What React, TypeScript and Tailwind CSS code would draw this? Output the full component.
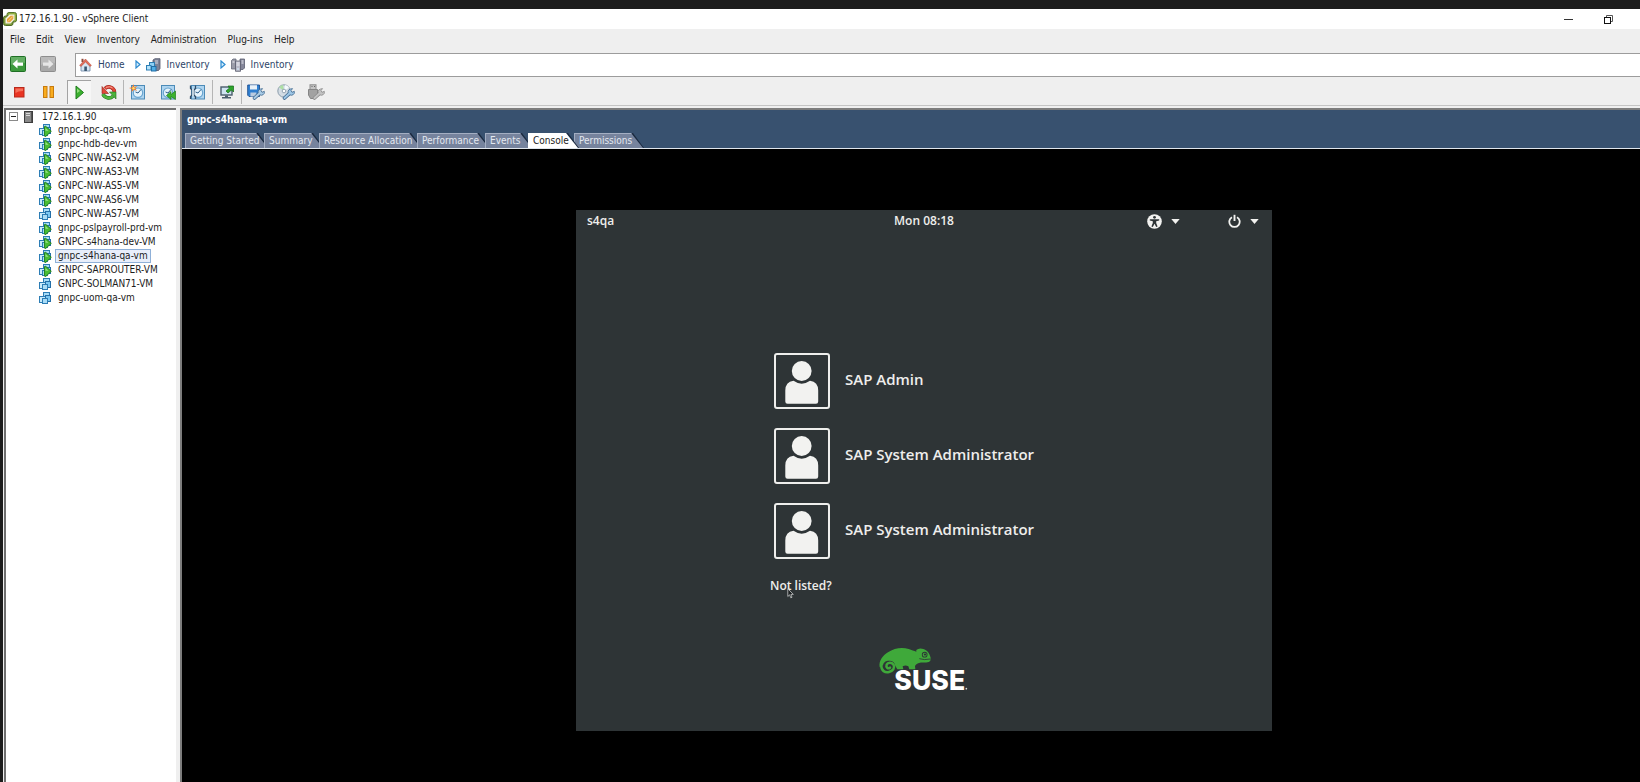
import React from "react";

type IconProps = { className?: string };

/* ---------- Window and navigation icons ---------- */

function VSphereLogo() {
  return (
    <svg viewBox="0 0 14 14" className="h-[14px] w-[14px]" aria-hidden="true">
      <rect x="4" y="0.5" width="9.5" height="9.5" rx="2" fill="#8fae3f" stroke="#56752a" />
      <rect x="0.5" y="4" width="9.5" height="9.5" rx="2" fill="#7f9c3a" stroke="#4d6a26" />
      <path d="M2.500 11.500V6.500L6.500 2.500H11.500V7.500L7.500 11.500Z" fill="#f4f1e4" />
      <path d="M4 10.2V7L7.5 3.8H10.3V6.8L7 10.2Z" fill="#e9a13b" />
      <path d="M4.5 9.8L10 4.300" stroke="#f6d48d" strokeWidth="1" />
    </svg>
  );
}

function NavArrow({ back }: { back?: boolean }) {
  return (
    <svg viewBox="0 0 16 16" className="h-4 w-4" aria-hidden="true">
      <rect x="0.5" y="0.5" width="15" height="15" rx="1" fill={back ? "#3c9a3c" : "#a9a9a9"} stroke={back ? "#1f6f25" : "#8d8d8d"} />
      <path d="M1 1H15V7Q8 5 1 9Z" fill="#fff" opacity="0.2" />
      {back ? (
        <path d="M2.5 8L7.5 3.6V6.4H13V9.8H7.5V12.5Z" fill="#fff" />
      ) : (
        <path d="M13.5 8L8.5 3.6V6.4H3V9.8H8.5V12.5Z" fill="#e6e6e6" />
      )}
    </svg>
  );
}

function HomeIcon() {
  return (
    <svg viewBox="0 0 13 14" className="h-[14px] w-[13px]" aria-hidden="true">
      <path d="M2 7L6.5 3L11 7V13H2Z" fill="#d7e6f2" stroke="#6d87a5" strokeWidth="0.8" />
      <path d="M2.5 0.8H4.5V4H2.5Z" fill="#8c4a3c" />
      <path d="M0.6 7.4L6.5 1L12.4 7.4L11 8.4L6.5 4L2 8.4Z" fill="#e2705c" stroke="#b04231" strokeWidth="0.5" />
      <rect x="5.3" y="8.5" width="2.6" height="4.5" fill="#39566f" />
    </svg>
  );
}

function InventoryVmIcon() {
  return (
    <svg viewBox="0 0 15 14" className="h-[14px] w-[15px]" aria-hidden="true">
      <path d="M7 2L9 0.7H14V10.5L12.5 12.5H7Z" fill="#7d8296" stroke="#515669" strokeWidth="0.8" />
      <path d="M9 3H12M9 5H12" stroke="#d4d8e4" />
      <rect x="3.5" y="4.5" width="5" height="5" fill="#8fd0f4" stroke="#2d7fb5" />
      <rect x="0.5" y="7.5" width="4.5" height="4.5" fill="#b5e2fa" stroke="#2d7fb5" />
      <rect x="5.5" y="8.5" width="4.5" height="4.5" fill="#4eaee5" stroke="#226fa6" />
    </svg>
  );
}

function InventoryHostsIcon() {
  return (
    <svg viewBox="0 0 14 14" className="h-[14px] w-[14px]" aria-hidden="true">
      <path d="M0.5 2.5L2 1H5V11H0.5Z" fill="#9a9ca8" stroke="#666978" strokeWidth="0.8" />
      <path d="M9 1H13.5V10L12 11.5H9Z" fill="#85879a" stroke="#5b5e70" strokeWidth="0.8" />
      <path d="M4.5 3H9.5V13.3H4.5Z" fill="#b9bbc8" stroke="#585b6b" strokeWidth="0.8" />
      <path d="M5.5 5H8.5M5.5 7H8.5M1.5 4H3.5M10.5 3H12.5M10.5 5H12.5" stroke="#f1f1f6" />
      <circle cx="7" cy="11" r="0.9" fill="#d2e7f7" />
    </svg>
  );
}

function CrumbArrow() {
  return (
    <svg viewBox="0 0 6 9" className="h-[9px] w-[6px]" aria-hidden="true">
      <path d="M1 1L5 4.5L1 8Z" fill="#d6eefc" stroke="#2c8ad0" strokeWidth="1.2" />
    </svg>
  );
}

/* ---------- Toolbar icons ---------- */

function StopIcon() {
  return (
    <svg viewBox="0 0 18 16" className="h-4 w-[18px]" aria-hidden="true">
      <rect x="4.500" y="3.5" width="9.5" height="9.5" fill="#e93423" stroke="#b9291b" />
      <path d="M5.500 4.5H13V7Q8 7 5.500 9Z" fill="#f98a72" opacity="0.7" />
    </svg>
  );
}

function PauseIcon() {
  return (
    <svg viewBox="0 0 18 16" className="h-4 w-[18px]" aria-hidden="true">
      <rect x="3.5" y="2.5" width="3.5" height="11" fill="#f9ad1f" stroke="#c77a0e" />
      <rect x="10" y="2.5" width="3.5" height="11" fill="#f9ad1f" stroke="#c77a0e" />
    </svg>
  );
}

function PlayIcon() {
  return (
    <svg viewBox="0 0 18 16" className="h-4 w-[18px]" aria-hidden="true">
      <path d="M5 2L12.500 8.5L5 15Z" fill="#3bb02e" stroke="#1f7d1c" />
      <path d="M6 4.5L9 7L6 9Z" fill="#92dd7c" />
    </svg>
  );
}

function ResetIcon() {
  return (
    <svg viewBox="0 0 18 16" className="h-4 w-[18px]" aria-hidden="true">
      <path d="M14.500 8A5.6 5.4 0 0 0 5 4.500" fill="none" stroke="#8f1f17" strokeWidth="3.600" />
      <path d="M14.500 8A5.6 5.4 0 0 0 5 4.500" fill="none" stroke="#e0493a" strokeWidth="2.600" />
      <path d="M2 2.500V9.500H8.500Z" fill="#e0493a" stroke="#8f1f17" strokeWidth="0.600" />
      <path d="M3 10.200A6 5.4 0 0 0 13 12.200" fill="none" stroke="#1e6b1c" strokeWidth="3.600" />
      <path d="M3 10.200A6 5.4 0 0 0 13 12.200" fill="none" stroke="#4db53c" strokeWidth="2.600" />
      <path d="M16 15V8H9.500Z" fill="#4db53c" stroke="#1e6b1c" strokeWidth="0.600" />
      <path d="M6 3.500Q9.5 1.600 12.6 4" stroke="#f9b3a6" strokeWidth="0.8" fill="none" />
    </svg>
  );
}

function Clock() {
  return (
    <>
      <rect x="2.5" y="1.5" width="13" height="13.500" fill="#aed4ef" stroke="#4c8bb8" />
      <circle cx="9" cy="8.7" r="4.7" fill="#e4f3fc" stroke="#6aa5d0" strokeWidth="1.2" />
      <path d="M9 9L12 5.5M9 9L6.5 8" stroke="#2d5f8c" strokeWidth="1" fill="none" />
    </>
  );
}

function SnapshotTakeIcon() {
  return (
    <svg viewBox="0 0 18 16" className="h-4 w-[18px]" aria-hidden="true">
      <Clock />
      <path d="M4.5 0L5.3 3L8.5 2L6.2 4.2L8 7L5 5.8L2.5 8L3 5L0 4L3.2 3.2Z" fill="#ef7b2f" />
      <circle cx="4.5" cy="4.2" r="1.2" fill="#ffdf6b" />
    </svg>
  );
}

function SnapshotRevertIcon() {
  return (
    <svg viewBox="0 0 18 16" className="h-4 w-[18px]" aria-hidden="true">
      <Clock />
      <path d="M7.5 11.5L12 7.5V10.5L16.5 7V15.5L12 12.5V15.5Z" fill="#3cb32e" stroke="#1f7d1c" strokeWidth="0.7" />
    </svg>
  );
}

function SnapshotManagerIcon() {
  return (
    <svg viewBox="0 0 18 16" className="h-4 w-[18px]" aria-hidden="true">
      <Clock />
      <path d="M1.5 1.5V4.5L3.2 6V11L1.5 12.5V15M6.5 1.5V4.5L4.8 6V11L6.5 12.5V15" fill="none" stroke="#314c66" strokeWidth="1.3" />
      <path d="M4 5V12" stroke="#dcebf5" strokeWidth="1.6" />
    </svg>
  );
}

function ConsoleIcon() {
  return (
    <svg viewBox="0 0 18 16" className="h-4 w-[18px]" aria-hidden="true">
      <rect x="3" y="3" width="11" height="8" fill="#cfe3f0" stroke="#4a5d6c" strokeWidth="1.4" />
      <path d="M7 11.5H10V13H13V14.5H4V13H7Z" fill="#4a5d6c" />
      <path d="M8 7L11.5 4L10 2H15.5V8L13.5 6L10 9Z" fill="#2fa52b" stroke="#14691a" strokeWidth="0.7" />
    </svg>
  );
}

function Wrench({ color, edge }: { color: string; edge: string }) {
  return (
    <>
      <path d="M7.5 14L13.2 8.8" stroke={edge} strokeWidth="3.6" strokeLinecap="round" />
      <path d="M12.5 10.5A3 3 0 0 1 13.5 5L15.5 4.6L14 6.6L15 8.3L17.3 7.3A3 3 0 0 1 12.5 10.5Z" fill={color} stroke={edge} strokeWidth="0.8" />
      <path d="M7.5 14L13.2 8.8" stroke={color} strokeWidth="2" strokeLinecap="round" />
    </>
  );
}

function FloppyWrenchIcon() {
  return (
    <svg viewBox="0 0 18 16" className="h-4 w-[18px]" aria-hidden="true">
      <path d="M0.7 1H12.5V12.5H2L0.7 11.2Z" fill="#2f7fd0" stroke="#1d4f91" strokeWidth="0.9" />
      <rect x="3" y="1.2" width="7" height="4.3" fill="#e9f1f8" />
      <rect x="3.4" y="8.5" width="6" height="4" fill="#b9cbe0" />
      <Wrench color="#a9cbe6" edge="#40698f" />
    </svg>
  );
}

function DiscWrenchIcon() {
  return (
    <svg viewBox="0 0 18 16" className="h-4 w-[18px]" aria-hidden="true">
      <circle cx="7" cy="7" r="6.2" fill="#d3dce4" stroke="#8294a4" strokeWidth="0.9" />
      <path d="M7 7L2 3.2A6 6 0 0 1 6 1Z" fill="#aee0a4" />
      <path d="M7 7L12 3.5A6 6 0 0 0 8 1Z" fill="#f5fafd" />
      <circle cx="7" cy="7" r="1.8" fill="#fff" stroke="#8294a4" strokeWidth="0.8" />
      <Wrench color="#9fc7e6" edge="#40698f" />
    </svg>
  );
}

function UsbWrenchIcon() {
  return (
    <svg viewBox="0 0 18 16" className="h-4 w-[18px]" aria-hidden="true">
      <rect x="3" y="0.8" width="6" height="5" fill="#c4c4c4" stroke="#8c8c8c" />
      <path d="M4.5 2.5H5.5M7 2.5H8" stroke="#666" />
      <path d="M1.5 5.5H10.5V11L8.5 14.5H3.5L1.5 11Z" fill="#a2a2a2" stroke="#858585" />
      <Wrench color="#c2c2c2" edge="#8c8c8c" />
    </svg>
  );
}

/* ---------- Tree icons ---------- */

function HostIcon() {
  return (
    <svg viewBox="0 0 9 12" className="h-3 w-[9px]" aria-hidden="true">
      <rect x="0.5" y="0.5" width="8" height="11" fill="#8a8a8a" stroke="#3e3e3e" />
      <path d="M2 2.5H6M2 4.5H6" stroke="#d9d9d9" />
      <path d="M7.5 1V11" stroke="#555" />
    </svg>
  );
}

function VmIcon({ running }: { running: boolean }) {
  return (
    <svg viewBox="0 0 13 13" className="h-[13px] w-[13px]" aria-hidden="true">
      <rect x="4.500" y="0.500" width="6" height="7" fill="#a6dcf7" stroke="#2c7db5" />
      <rect x="0.500" y="4.500" width="6" height="6" fill="#c9ebfb" stroke="#2c7db5" />
      <rect x="6.500" y="3.500" width="5" height="6" fill="#7cc8f2" stroke="#246fa8" />
      <rect x="3.500" y="6.500" width="5" height="5" fill="#a9dcf6" stroke="#2c7db5" />
      {running && <path d="M5.500 2.500Q6 1.800 7 2.600L12.300 7.300L7 12.200Q5.500 13 5.500 11.800Z" fill="#48bd34" stroke="#1e7a1c" strokeWidth="0.9" />}
      {running && <path d="M6.500 4L9.500 6.800H6.500Z" fill="#9ae388" />}
    </svg>
  );
}

/* ---------- Guest login icons ---------- */

function AccessibilityIcon() {
  return (
    <svg viewBox="0 0 15 15" className="h-[15px] w-[15px]" aria-hidden="true">
      <circle cx="7.5" cy="7.5" r="7.3" fill="#f2f2f0" />
      <circle cx="7.5" cy="3.3" r="1.4" fill="#2e3436" />
      <path d="M2.8 5.2H12.2V6.6L9.2 7.2V9L10.6 12.6L9.2 13L7.5 9.8L5.8 13L4.4 12.6L5.8 9V7.2L2.8 6.6Z" fill="#2e3436" />
    </svg>
  );
}

function PowerIcon() {
  return (
    <svg viewBox="0 0 13 14" className="h-[14px] w-[13px]" aria-hidden="true">
      <path d="M4 3.2A5.2 5.2 0 1 0 9 3.2" fill="none" stroke="#f2f2f0" strokeWidth="1.8" />
      <path d="M6.5 0.8V7" stroke="#f2f2f0" strokeWidth="1.9" />
    </svg>
  );
}

function CaretDown() {
  return (
    <svg viewBox="0 0 9 5" className="h-[5px] w-[9px]" aria-hidden="true">
      <path d="M0.3 0H8.7L4.5 5Z" fill="#f2f2f0" />
    </svg>
  );
}

function Avatar() {
  return (
    <span className="block h-14 w-14 shrink-0 rounded-[3px] border-2 border-[#eeeeec]">
      <svg viewBox="2 2 52 52" className="h-full w-full" aria-hidden="true">
        <path d="M11.3 37.5Q11.3 29 19.5 27.8Q27.7 33.6 36 27.8Q44.2 29 44.2 37.5V48.5Q44.2 50.8 42 50.8H13.5Q11.3 50.8 11.3 48.5Z" fill="#f2f2f0" />
        <circle cx="27.7" cy="18" r="9.9" fill="#f2f2f0" />
      </svg>
    </span>
  );
}

function SuseLogo() {
  return (
    <svg viewBox="54 48 276 168" className="h-[56px] w-[92px]" role="img" aria-label="SUSE">
      <path
        d="M59 112C56 92 68 77 84 67C103 54 126 51 146 57C155 60 162 63 169 65Q167 59 173 58Q180 54 190 57C201 60 209 70 212 84Q213 93 206 96C196 99 188 97 180 98C172 99 167 103 165 108L166 118H148L145 109C139 106 134 106 128 109L130 118H112L104 104C104 90 72 86 69 106Z"
        fill="#3fa93a"
      />
      <path
        d="M64 108C64 122 75 129 87 126C99 123 105 114 101 105C97 97 84 96 80 104C77 112 84 118 90 113"
        fill="none"
        stroke="#3fa93a"
        strokeWidth="7.5"
        strokeLinecap="round"
      />
      <circle cx="194" cy="74" r="8.5" fill="#2e3436" />
      <circle cx="194" cy="74" r="6" fill="#3fa93a" />
      <ellipse cx="195" cy="73.500" rx="3.600" ry="2.800" fill="#2e3436" />
      <path d="M178 86Q192 91 211 87" fill="none" stroke="#2e3436" strokeWidth="2.5" />
      <text x="103" y="180" fill="#fff" fontFamily="Inter, sans-serif" fontWeight="800" fontSize="80">
        SUSE
      </text>
      <circle cx="319" cy="176" r="2.500" fill="#d8d8d8" />
    </svg>
  );
}

function Pointer({ className }: IconProps) {
  return (
    <svg viewBox="0 0 7 11" className={className} aria-hidden="true">
      <path d="M0.8 0.8V8.5L2.6 6.8L3.8 9.8L5 9.3L3.9 6.400H6.300Z" fill="#1c2022" stroke="#c9cbcb" strokeWidth="0.8" />
    </svg>
  );
}

/* ---------- Data ---------- */

const menus = ["File", "Edit", "View", "Inventory", "Administration", "Plug-ins", "Help"];

const machines = [
  { name: "gnpc-bpc-qa-vm", running: true },
  { name: "gnpc-hdb-dev-vm", running: true },
  { name: "GNPC-NW-AS2-VM", running: true },
  { name: "GNPC-NW-AS3-VM", running: true },
  { name: "GNPC-NW-AS5-VM", running: true },
  { name: "GNPC-NW-AS6-VM", running: true },
  { name: "GNPC-NW-AS7-VM", running: false },
  { name: "gnpc-pslpayroll-prd-vm", running: true },
  { name: "GNPC-s4hana-dev-VM", running: true },
  { name: "gnpc-s4hana-qa-vm", running: true },
  { name: "GNPC-SAPROUTER-VM", running: true },
  { name: "GNPC-SOLMAN71-VM", running: false },
  { name: "gnpc-uom-qa-vm", running: false },
];

const selected = "gnpc-s4hana-qa-vm";

const tabs = [
  { label: "Getting Started", width: "w-[84px]" },
  { label: "Summary", width: "w-[60px]" },
  { label: "Resource Allocation", width: "w-[103px]" },
  { label: "Performance", width: "w-[73px]" },
  { label: "Events", width: "w-[48px]" },
  { label: "Console", width: "w-[51px]" },
  { label: "Permissions", width: "w-[70px]" },
];

const users = ["SAP Admin", "SAP System Administrator", "SAP System Administrator"];

/* ---------- Layout parts ---------- */

function ToolButton({ label, children, pressed }: { label: string; children: React.ReactNode; pressed?: boolean }) {
  return (
    <button
      type="button"
      aria-label={label}
      className={
        pressed
          ? "flex h-6 w-6 items-center justify-center border-t border-l border-[#a3a3a3] bg-[#f6f6f6]"
          : "flex h-6 w-6 items-center justify-center"
      }
    >
      {children}
    </button>
  );
}

function Divider() {
  return <span className="-mx-1 h-6 w-px bg-[#b5b5b5]" />;
}

function Tab({ label, width, active }: { label: string; width: string; active: boolean }) {
  return (
    <button
      type="button"
      role="tab"
      aria-selected={active}
      className={`${width} relative -mr-[5px] h-[15px] shrink-0 last:mr-0 ${active ? "z-10" : ""}`}
    >
      <span className="absolute inset-0 bg-[#1b2a40] [clip-path:polygon(0_0,calc(100%-11px)_0,100%_100%,0_100%)]" />
      <span
        className={`absolute inset-y-0 right-px left-0 [clip-path:polygon(0_0,calc(100%-12px)_0,100%_100%,0_100%)] ${
          active ? "bg-white" : "border-t border-l border-[#a3aec2] bg-[#76839d]"
        }`}
      />
      <span
        className={`relative block pl-[5px] text-left text-[10px] leading-[15px] whitespace-nowrap ${
          active ? "text-[#1c1c1c]" : "text-[#e3e8f0]"
        }`}
      >
        {label}
      </span>
    </button>
  );
}

function Sidebar() {
  return (
    <aside className="w-[172px] shrink-0 border-t-2 border-l-2 border-[#6f6f6f] bg-white text-[10px] leading-[14px] text-[#1c1c1c]">
      <div className="flex h-[13px] items-center pl-[3px]">
        <button type="button" aria-label="Collapse 172.16.1.90" className="flex h-[9px] w-[9px] items-center justify-center border border-[#8a8a8a]">
          <span className="h-px w-[5px] bg-[#222]" />
        </button>
        <span className="ml-[6px]">
          <HostIcon />
        </span>
        <span className="ml-[9px]">172.16.1.90</span>
      </div>
      <ul>
        {machines.map((m) => (
          <li key={m.name} className="flex h-[14px] items-center pl-[33px]">
            <VmIcon running={m.running} />
            <button
              type="button"
              className={
                m.name === selected
                  ? "ml-[3px] h-[14px] border border-[#8fb0d8] bg-[#e8eefa] px-[2px] leading-[12px] whitespace-nowrap"
                  : "ml-[3px] h-[14px] px-[3px] whitespace-nowrap"
              }
            >
              {m.name}
            </button>
          </li>
        ))}
      </ul>
    </aside>
  );
}

function LoginScreen() {
  return (
    <div className="flex h-[521px] w-[696px] flex-col bg-[#2e3436] font-['Open_Sans','Noto_Sans',sans-serif] text-[#eeeeec]">
      <header className="grid grid-cols-3 items-center px-[11px] pt-[2px] text-[12px] leading-[18px] font-semibold">
        <span>s4qa</span>
        <span className="text-center">Mon 08:18</span>
        <div className="flex items-center justify-end gap-[48px] pr-[2px]">
          <button type="button" aria-label="Accessibility" className="flex items-center gap-[9px]">
            <AccessibilityIcon />
            <CaretDown />
          </button>
          <button type="button" aria-label="Power" className="flex items-center gap-[9px]">
            <PowerIcon />
            <CaretDown />
          </button>
        </div>
      </header>
      <ul className="mt-[123px] flex flex-col gap-[19px] pl-[198px]">
        {users.map((u, i) => (
          <li key={i}>
            <button type="button" className="flex items-center gap-[15px] text-[15px] leading-5 font-semibold">
              <Avatar />
              <span className="pb-1">{u}</span>
            </button>
          </li>
        ))}
      </ul>
      <div className="mt-[13px] pl-[194px]">
        <button type="button" className="relative text-[12px] leading-5 font-semibold">
          Not listed?
          <Pointer className="absolute top-3 left-[17px] h-[11px] w-[7px]" />
        </button>
      </div>
      <div className="mt-[50px] flex justify-center">
        <SuseLogo />
      </div>
    </div>
  );
}

export default function App() {
  return (
    <div className="flex min-h-screen flex-col bg-[#1c1c1c] pt-[9px] pl-[3px]">
      <div className="flex flex-1 flex-col bg-[#efefef] font-['DejaVu_Sans_Condensed','DejaVu_Sans',sans-serif] text-[#222]">
        <header className="flex h-5 items-center bg-white pr-[27px]">
          <VSphereLogo />
          <h1 className="ml-[2px] text-[10px] leading-5">172.16.1.90 - vSphere Client</h1>
          <div className="ml-auto flex items-center gap-[31px]">
            <button type="button" aria-label="Minimize" className="flex h-[10px] w-[9px] items-center">
              <span className="h-px w-full bg-[#333]" />
            </button>
            <button type="button" aria-label="Restore">
              <svg viewBox="0 0 9 9" className="h-[9px] w-[9px]" aria-hidden="true">
                <path d="M2.500 2.500V0.500H8.500V6.500H6.500" fill="none" stroke="#555" />
                <rect x="0.500" y="2.500" width="6" height="6" fill="#fff" stroke="#111" />
              </svg>
            </button>
          </div>
        </header>

        <nav aria-label="Menu" className="flex h-6 items-center gap-[11px] pb-[3px] pl-[7px] text-[10px] leading-5">
          {menus.map((m) => (
            <button type="button" key={m}>
              {m}
            </button>
          ))}
        </nav>

        <div className="flex h-6 items-center">
          <div className="flex w-[72px] shrink-0 items-center gap-[14px] pb-[2px] pl-[7px]">
            <button type="button" aria-label="Back">
              <NavArrow back />
            </button>
            <button type="button" aria-label="Forward">
              <NavArrow />
            </button>
          </div>
          <nav
            aria-label="Location"
            className="flex h-6 flex-1 items-center border-y border-l border-[#9c9c9c] bg-white pb-px pl-[3px] text-[10px] text-[#2c4468]"
          >
            <a href="#home" className="flex items-center gap-[6px]">
              <HomeIcon />
              Home
            </a>
            <span className="mr-[5px] ml-[10px]">
              <CrumbArrow />
            </span>
            <a href="#inventory" className="flex items-center gap-[6px]">
              <InventoryVmIcon />
              Inventory
            </a>
            <span className="mr-[5px] ml-[10px]">
              <CrumbArrow />
            </span>
            <a href="#hosts" className="flex items-center gap-[6px]">
              <InventoryHostsIcon />
              Inventory
            </a>
          </nav>
        </div>

        <div role="toolbar" aria-label="Virtual machine" className="flex h-[29px] items-center gap-[6px] border-b border-[#c4c4c4] pt-px pl-1">
          <ToolButton label="Shut down">
            <StopIcon />
          </ToolButton>
          <ToolButton label="Suspend">
            <PauseIcon />
          </ToolButton>
          <ToolButton label="Power on" pressed>
            <PlayIcon />
          </ToolButton>
          <ToolButton label="Restart">
            <ResetIcon />
          </ToolButton>
          <Divider />
          <ToolButton label="Take snapshot">
            <SnapshotTakeIcon />
          </ToolButton>
          <ToolButton label="Revert snapshot">
            <SnapshotRevertIcon />
          </ToolButton>
          <ToolButton label="Snapshot manager">
            <SnapshotManagerIcon />
          </ToolButton>
          <Divider />
          <ToolButton label="Launch console">
            <ConsoleIcon />
          </ToolButton>
          <Divider />
          <ToolButton label="Floppy drive">
            <FloppyWrenchIcon />
          </ToolButton>
          <ToolButton label="Disc drive">
            <DiscWrenchIcon />
          </ToolButton>
          <ToolButton label="USB devices">
            <UsbWrenchIcon />
          </ToolButton>
        </div>

        <div className="flex flex-1 gap-[4px] pt-[2px] pl-px">
          <Sidebar />
          <main className="flex min-w-0 flex-1 flex-col border-t-2 border-l-2 border-[#7d7d7d] bg-black">
            <div className="flex h-[39px] flex-col justify-between border-b border-[#dfe5ec] bg-[#38516f]">
              <h2 className="pt-[2px] pl-[5px] text-[10px] leading-[16px] font-bold text-white">
                gnpc-s4hana-qa-vm
              </h2>
              <div role="tablist" className="flex pl-[3px]">
                {tabs.map((t) => (
                  <Tab key={t.label} label={t.label} width={t.width} active={t.label === "Console"} />
                ))}
              </div>
            </div>
            <div className="flex flex-1 justify-center pt-[61px] pb-[50px] pl-[26px]">
              <LoginScreen />
            </div>
          </main>
        </div>
      </div>
    </div>
  );
}
